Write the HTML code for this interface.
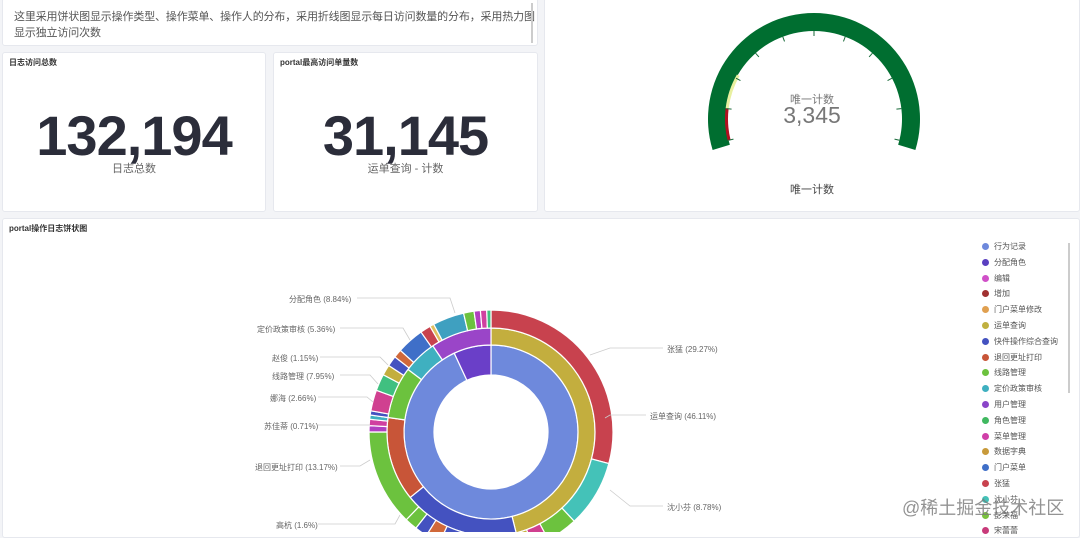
<!DOCTYPE html>
<html><head><meta charset="utf-8"><style>
*{margin:0;padding:0;box-sizing:border-box}
body{width:1080px;height:532px;overflow:hidden;background:#f3f4f7;font-family:"Liberation Sans","Noto Sans CJK SC",sans-serif;position:relative}
.p{position:absolute;background:#fff;border:1px solid #e6e8ee;border-radius:3px}
.t{position:absolute;left:6px;top:4px;font-size:8px;font-weight:bold;color:#333}
.big{position:absolute;width:100%;text-align:center;font-weight:bold;color:#2b2d3a;font-size:56px;letter-spacing:-1px}
.sub{position:absolute;width:100%;text-align:center;font-size:11px;color:#666}
.lg{position:absolute;left:982px;font-size:8px;color:#555}
.lg i{display:inline-block;width:7px;height:7px;border-radius:50%;margin-right:5px;vertical-align:-1px}
.lb{position:absolute;font-size:8px;color:#666;white-space:nowrap}
</style></head><body>
<div class="p" style="left:2px;top:-2px;width:536px;height:48px">
<div style="position:absolute;left:11px;top:10px;font-size:11px;line-height:16px;color:#555;white-space:nowrap;letter-spacing:-0.15px">这里采用饼状图显示操作类型、操作菜单、操作人的分布，采用折线图显示每日访问数量的分布，采用热力图<br>显示独立访问次数</div>
<div style="position:absolute;right:4px;top:4px;width:2px;height:40px;background:#ccc"></div></div>
<div class="p" style="left:2px;top:52px;width:264px;height:160px"><div class="t">日志访问总数</div>
<div class="big" style="top:50px">132,194</div><div class="sub" style="top:107px">日志总数</div></div>
<div class="p" style="left:273px;top:52px;width:265px;height:160px"><div class="t">portal最高访问单量数</div>
<div class="big" style="top:50px">31,145</div><div class="sub" style="top:107px">运单查询 - 计数</div></div>
<div class="p" style="left:544px;top:-2px;width:536px;height:214px">
<svg width="536" height="214" style="position:absolute;left:0;top:0" id="g"></svg>
<div class="sub" style="top:92px;font-size:11px;color:#777">唯一计数</div>
<div class="sub" style="top:103px;font-size:23px;color:#777">3,345</div>
<div class="sub" style="top:182px;font-size:11px;color:#444">唯一计数</div></div>
<div class="p" style="left:2px;top:218px;width:1078px;height:320px"><div class="t">portal操作日志饼状图</div></div>
<svg width="1080" height="532" style="position:absolute;left:0;top:0" id="pie"></svg>
<div style="position:absolute;left:1068px;top:243px;width:2px;height:150px;background:#ccc"></div>
<div id="leg"></div>
<div class="lb" style="left:289px;top:294px">分配角色 (8.84%)</div>
<div class="lb" style="left:257px;top:324px">定价政策审核 (5.36%)</div>
<div class="lb" style="left:272px;top:353px">赵俊 (1.15%)</div>
<div class="lb" style="left:272px;top:371px">线路管理 (7.95%)</div>
<div class="lb" style="left:270px;top:393px">娜海 (2.66%)</div>
<div class="lb" style="left:264px;top:421px">苏佳蒂 (0.71%)</div>
<div class="lb" style="left:255px;top:462px">退回更址打印 (13.17%)</div>
<div class="lb" style="left:276px;top:520px">高杭 (1.6%)</div>
<div class="lb" style="left:667px;top:344px">张猛 (29.27%)</div>
<div class="lb" style="left:650px;top:411px">运单查询 (46.11%)</div>
<div class="lb" style="left:667px;top:502px">沈小芬 (8.78%)</div>
<div style="position:absolute;left:902px;top:494px;font-size:18px;color:rgba(120,120,120,.8)">@稀土掘金技术社区</div>
<script>
var N="http://www.w3.org/2000/svg";
function arc(svg,cx,cy,r0,r1,a0,a1,col,sw){var f=Math.PI/180,s=Math.sin,c=Math.cos;
var p=(a,r)=>(cx+r*s(a*f)).toFixed(2)+" "+(cy-r*c(a*f)).toFixed(2);var L=a1-a0>180?1:0;
var e=document.createElementNS(N,"path");e.setAttribute("d","M"+p(a0,r1)+"A"+r1+" "+r1+" 0 "+L+" 1 "+p(a1,r1)+"L"+p(a1,r0)+"A"+r0+" "+r0+" 0 "+L+" 0 "+p(a0,r0)+"Z");
e.setAttribute("fill",col);e.setAttribute("stroke",sw===undefined?"#fff":sw);e.setAttribute("stroke-width",sw===undefined?1.2:0);svg.appendChild(e);}
var g=document.getElementById("g");arc(g,269,120,88,106,-107,107,"#006e30","none");
arc(g,269,120,86,89,-104,-83,"#b01020","none");arc(g,269,120,86,89,-83,-60,"#e8f0a0","none");
for(var i=0;i<=10;i++){var a=(-104+i*20.8)*Math.PI/180;var l=document.createElementNS(N,"line");
l.setAttribute("x1",269+88*Math.sin(a));l.setAttribute("y1",120-88*Math.cos(a));l.setAttribute("x2",269+83*Math.sin(a));l.setAttribute("y2",120-83*Math.cos(a));l.setAttribute("stroke","#1a6a3a");l.setAttribute("stroke-width",1);g.appendChild(l);}
var P=document.getElementById("pie"),cx=491,cy=432;
arc(P,cx,cy,57,87,0,335,"#6e89dc");arc(P,cx,cy,57,87,335,360,"#6a3fc8");
[[0,166,"#c3ae3e"],[166,231,"#4452c0"],[231,278,"#c85538"],[278,307,"#6cc23e"],[307,326,"#3fb0c0"],[326,360,"#9a45c8"]].forEach(d=>arc(P,cx,cy,87,104,d[0],d[1],d[2]));
[[0,105,"#c8424e"],[105,137,"#44c2b8"],[137,152,"#6cc23e"],[152,160,"#d04090"],[160,180,"#c3ae3e"],[180,205,"#4452c0"],[205,212,"#d0683a"],[212,218,"#4452c0"],[218,224,"#6cc23e"],[224,270,"#6cc23e"],[270,273,"#b040c0"],[273,276,"#d040a0"],[276,278,"#3fb0c0"],[278,280,"#4452c0"],[280,290,"#d04090"],[290,298,"#40c080"],[298,303,"#c3ae3e"],[303,308,"#4452c0"],[308,312,"#d0683a"],[312,325,"#3f6fc8"],[325,330,"#c8424e"],[330,332,"#e0c060"],[332,347,"#3fa0c0"],[347,352,"#6cc23e"],[352,355,"#b040c0"],[355,358,"#d040a0"],[358,360,"#40c080"]].forEach(d=>arc(P,cx,cy,104,122,d[0],d[1],d[2]));
var cols=["#6e89dc","#5a3fc0","#d050c8","#a03030","#e0a050","#c0b040","#4452c0","#c85538","#6cc23e","#3fb0c0","#8a45c8","#40b860","#d040a8","#c89a3a","#3f6fc8","#c8424e","#44c2b8","#7ac23e","#c83a7a"];
var names=["行为记录","分配角色","编辑","增加","门户菜单修改","运单查询","快件操作综合查询","退回更址打印","线路管理","定价政策审核","用户管理","角色管理","菜单管理","数据字典","门户菜单","张猛","沈小芬","彭荣福","宋蕾蕾"];
var h="";cols.forEach((c,i)=>h+='<div class="lg" style="top:'+(241+i*15.8)+'px"><i style="background:'+c+'"></i>'+names[i]+'</div>');document.getElementById("leg").innerHTML=h;
function ln(pts){var e=document.createElementNS(N,"polyline");e.setAttribute("points",pts);e.setAttribute("fill","none");e.setAttribute("stroke","#ccc");e.setAttribute("stroke-width",.8);P.appendChild(e);}
ln("357,298 450,298 455,313");ln("340,328 403,328 410,340");ln("320,357 380,357 388,365");ln("340,375 370,375 378,384");ln("318,397 367,397 373,402");ln("318,425 370,425");ln("340,466 360,466 370,460");ln("318,524 395,524 400,515");ln("663,348 610,348 590,355");ln("646,415 610,415 605,418");ln("663,506 630,506 610,490");
</script>
</body></html>
